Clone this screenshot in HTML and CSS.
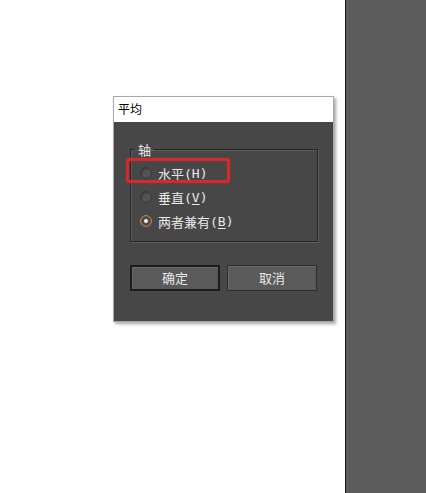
FILE: index.html
```html
<!DOCTYPE html>
<html>
<head>
<meta charset="utf-8">
<link rel="stylesheet" href="styles.css">
</head>
<body>
    <div class="canvas">
        <div class="dialog">
            <div class="titlebar">平均</div>
            <div class="dialogBody">
                <fieldset class="group">
                    <legend>轴</legend>
                    <div class="radioRow highlight"><span class="radio"></span>水平(<u>H</u>)</div>
                    <div class="radioRow"><span class="radio"></span>垂直(<u>V</u>)</div>
                    <div class="radioRow"><span class="radio checked"></span>两者兼有(<u>B</u>)</div>
                </fieldset>
                <div class="buttons">
                    <div class="button default">确定</div>
                    <div class="button">取消</div>
                </div>
            </div>
        </div>
    </div>
    <div class="panel"></div>
</body>
</html>
```

FILE: styles.css
```css
html, body {
    margin: 0;
    padding: 0;
}
body {
    display: flex;
    width: 426px;
    height: 493px;
    background: #fff;
    font-family: "Noto Sans CJK SC", "DejaVu Sans", sans-serif;
    font-size: 12px;
}
.canvas {
    width: 345px;
    box-sizing: border-box;
    padding: 96px 0 0 113px;
}
.panel {
    flex: 1;
    border-left: 1px solid #141414;
    background: #5c5c5c;
}
.dialog {
    width: 219px;
    border: 1px solid #a8a8a8;
    box-shadow: 2px 2px 3px rgba(0, 0, 0, 0.35);
}
.titlebar {
    height: 25px;
    line-height: 24px;
    padding-left: 4px;
    background: #fff;
    color: #000;
}
.dialogBody {
    background: #474747;
    padding: 19px 15px 30px 16px;
    color: #e8e8e8;
}
.group {
    margin: 0;
    padding: 3px 0 8px 9px;
    border: 1px solid #262626;
    box-shadow: 1px 1px 0 #5e5e5e, inset 1px 1px 0 #5a5a5a;
}
.group legend {
    padding: 0 3px;
    margin-left: -5px;
    font-size: 13px;
    line-height: 17px;
}
.radioRow {
    position: relative;
    display: flex;
    align-items: center;
    height: 24px;
    font-family: "DejaVu Sans Mono", "Noto Sans CJK SC", monospace;
    font-size: 13px;
}
.radioRow u {
    text-underline-offset: 2px;
}
.radio {
    width: 10px;
    height: 10px;
    margin-right: 6px;
    border-radius: 50%;
    border: 1px solid #3a3a3a;
    background: #525252;
    box-shadow: inset 1px 1px 1px rgba(0, 0, 0, 0.3);
    flex: none;
}
.radio.checked {
    position: relative;
    border-color: #b8854f;
    background: #4a4a4a;
    box-shadow: inset 0 0 0 1px #6a5238;
}
.radio.checked::after {
    content: "";
    position: absolute;
    left: 3px;
    top: 3px;
    width: 4px;
    height: 4px;
    border-radius: 50%;
    background: #f0f0f0;
}
.highlight::after {
    content: "";
    position: absolute;
    left: -14px;
    top: -3px;
    width: 98px;
    height: 19px;
    border: 3px solid #d8282c;
    border-radius: 3px;
    box-shadow: 0 0 2px rgba(216, 40, 44, 0.6);
}
.buttons {
    display: flex;
    gap: 7px;
    margin-top: 23px;
}
.button {
    width: 88px;
    height: 24px;
    line-height: 24px;
    text-align: center;
    font-size: 13px;
    background: #5a5a5a;
    border: 1px solid #2c2c2c;
    box-shadow: inset 1px 1px 0 #6a6a6a;
}
.button.default {
    width: 86px;
    height: 22px;
    line-height: 22px;
    border: 2px solid #1c1c1c;
}
```
